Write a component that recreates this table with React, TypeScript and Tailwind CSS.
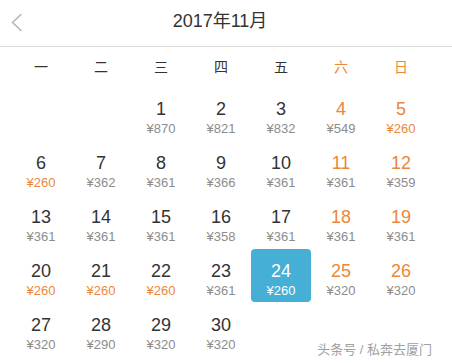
import React from "react";

type Day = { d: number; p: string; wk?: boolean; hot?: boolean; sel?: boolean };

const data: (Day | null)[] = [
  null, null,
  { d: 1, p: "870" }, { d: 2, p: "821" }, { d: 3, p: "832" }, { d: 4, p: "549", wk: true }, { d: 5, p: "260", wk: true, hot: true },
  { d: 6, p: "260", hot: true }, { d: 7, p: "362" }, { d: 8, p: "361" }, { d: 9, p: "366" }, { d: 10, p: "361" }, { d: 11, p: "361", wk: true }, { d: 12, p: "359", wk: true },
  { d: 13, p: "361" }, { d: 14, p: "361" }, { d: 15, p: "361" }, { d: 16, p: "358" }, { d: 17, p: "361" }, { d: 18, p: "361", wk: true }, { d: 19, p: "361", wk: true },
  { d: 20, p: "260", hot: true }, { d: 21, p: "260", hot: true }, { d: 22, p: "260", hot: true }, { d: 23, p: "361" }, { d: 24, p: "260", sel: true }, { d: 25, p: "320", wk: true }, { d: 26, p: "320", wk: true },
  { d: 27, p: "320" }, { d: 28, p: "290" }, { d: 29, p: "320" }, { d: 30, p: "320" },
];

const weekdays = ["一", "二", "三", "四", "五", "六", "日"];

export default function App() {
  return (
    <div
      className="relative w-[452px] h-[363px] bg-white overflow-hidden"
      style={{ fontFamily: '"Liberation Sans", "Noto Sans CJK SC", sans-serif' }}
    >
      <div className="relative h-[47px] flex items-center justify-center border-b border-[#dcdcdc]">
        <svg className="absolute left-[9px] top-[13px]" width="15" height="19" viewBox="0 0 15 19">
          <path d="M12 1.5 L3.5 9.5 L12 17.5" fill="none" stroke="#b4b4b4" strokeWidth="1.6" strokeLinecap="round" strokeLinejoin="round" />
        </svg>
        <span className="text-[18px] text-[#333] leading-none ml-[-12px] mt-[-5px]">2017年11月</span>
      </div>
      <div className="pl-[11px]">
        <div className="grid grid-cols-[repeat(7,60px)] h-[40px] items-center">
          {weekdays.map((w, i) => (
            <div
              key={w}
              className={`text-center text-[14px] mt-[1px] ${i >= 5 ? "text-[#ec8739]" : "text-[#333]"}`}
            >
              {w}
            </div>
          ))}
        </div>
        <div className="grid grid-cols-[repeat(7,60px)] gap-y-[1px]">
          {data.map((c, i) =>
            c ? (
              <div
                key={i}
                className={`h-[53px] flex flex-col items-center pt-[12px] ${c.sel ? "bg-[#45afd6] rounded-[4px]" : ""}`}
              >
                <div
                  className={`text-[18px] leading-[20px] ${c.sel ? "text-white" : c.wk ? "text-[#ec8739]" : "text-[#333]"}`}
                >
                  {c.d}
                </div>
                <div
                  className={`mt-[2px] text-[13px] leading-[16px] ${c.sel ? "text-white" : c.hot ? "text-[#ec8739]" : "text-[#8c8c8c]"}`}
                >
                  ¥{c.p}
                </div>
              </div>
            ) : (
              <div key={i} className="h-[53px]" />
            )
          )}
        </div>
      </div>
      <div className="absolute right-[20px] bottom-[5px] text-[13px] leading-[16px] text-[#a0a0a0]">
        头条号 / 私奔去厦门
      </div>
    </div>
  );
}
